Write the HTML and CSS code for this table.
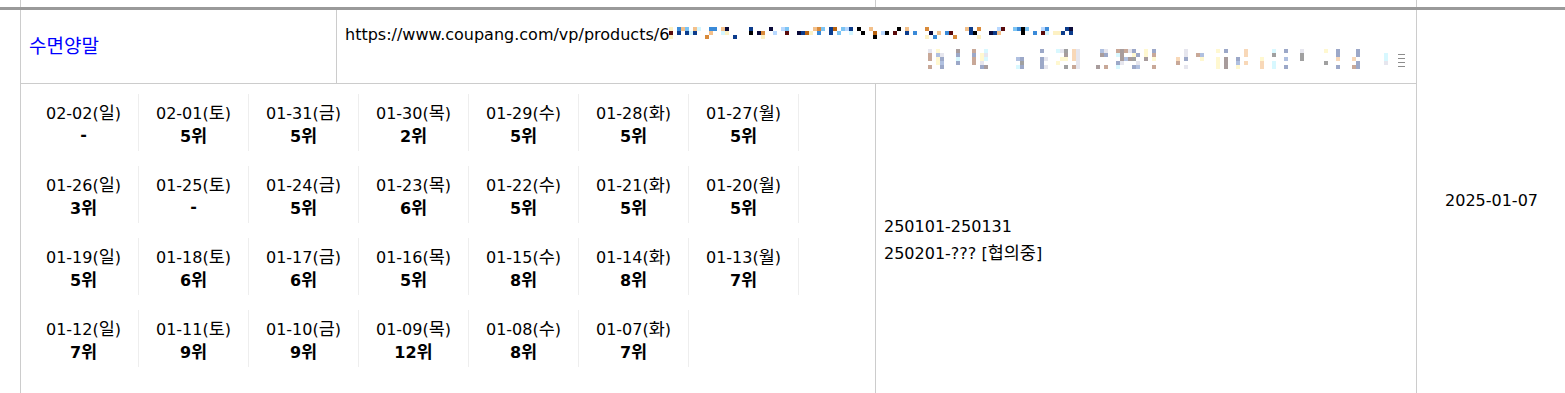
FILE: index.html
```html
<!DOCTYPE html>
<html lang="ko">
<head>
<meta charset="utf-8">
<title>순위</title>
<link rel="stylesheet" href="styles.css">
</head>
<body>
<div class="prev-row">
  <div class="prev-cell prev-a"></div>
  <div class="prev-cell prev-b"></div>
  <div class="prev-cell prev-c"></div>
</div>
<div class="divider"></div>
<table class="sheet">
  <colgroup>
    <col class="c1"><col class="c2"><col class="c3"><col class="c4">
  </colgroup>
  <tbody>
    <tr class="row-top">
      <td class="name"><a href="#" class="name-link"><span class="ko ko-name">수면양말</span></a></td>
      <td class="url" colspan="2">
        <div class="url-line">https://www.coupang.com/vp/products/6<svg class="mosaic mosaic-a" id="mosaicA" width="404" height="12" viewBox="0 0 404 12"></svg></div>
        <div class="url-sub"><svg class="mosaic mosaic-b" id="mosaicB" width="480" height="20" viewBox="0 0 480 20"></svg></div>
      </td>
      <td class="reg" rowspan="2">2025-01-07</td>
    </tr>
    <tr class="row-bottom">
      <td class="ranks" colspan="2">
        <div class="rank-grid">
          <div class="day"><div class="d">02-02(<span class="ko">일</span>)</div><div class="r">-</div></div>
          <div class="day"><div class="d">02-01(<span class="ko">토</span>)</div><div class="r">5<span class="ko">위</span></div></div>
          <div class="day"><div class="d">01-31(<span class="ko">금</span>)</div><div class="r">5<span class="ko">위</span></div></div>
          <div class="day"><div class="d">01-30(<span class="ko">목</span>)</div><div class="r">2<span class="ko">위</span></div></div>
          <div class="day"><div class="d">01-29(<span class="ko">수</span>)</div><div class="r">5<span class="ko">위</span></div></div>
          <div class="day"><div class="d">01-28(<span class="ko">화</span>)</div><div class="r">5<span class="ko">위</span></div></div>
          <div class="day"><div class="d">01-27(<span class="ko">월</span>)</div><div class="r">5<span class="ko">위</span></div></div>
          <div class="day"><div class="d">01-26(<span class="ko">일</span>)</div><div class="r">3<span class="ko">위</span></div></div>
          <div class="day"><div class="d">01-25(<span class="ko">토</span>)</div><div class="r">-</div></div>
          <div class="day"><div class="d">01-24(<span class="ko">금</span>)</div><div class="r">5<span class="ko">위</span></div></div>
          <div class="day"><div class="d">01-23(<span class="ko">목</span>)</div><div class="r">6<span class="ko">위</span></div></div>
          <div class="day"><div class="d">01-22(<span class="ko">수</span>)</div><div class="r">5<span class="ko">위</span></div></div>
          <div class="day"><div class="d">01-21(<span class="ko">화</span>)</div><div class="r">5<span class="ko">위</span></div></div>
          <div class="day"><div class="d">01-20(<span class="ko">월</span>)</div><div class="r">5<span class="ko">위</span></div></div>
          <div class="day"><div class="d">01-19(<span class="ko">일</span>)</div><div class="r">5<span class="ko">위</span></div></div>
          <div class="day"><div class="d">01-18(<span class="ko">토</span>)</div><div class="r">6<span class="ko">위</span></div></div>
          <div class="day"><div class="d">01-17(<span class="ko">금</span>)</div><div class="r">6<span class="ko">위</span></div></div>
          <div class="day"><div class="d">01-16(<span class="ko">목</span>)</div><div class="r">5<span class="ko">위</span></div></div>
          <div class="day"><div class="d">01-15(<span class="ko">수</span>)</div><div class="r">8<span class="ko">위</span></div></div>
          <div class="day"><div class="d">01-14(<span class="ko">화</span>)</div><div class="r">8<span class="ko">위</span></div></div>
          <div class="day"><div class="d">01-13(<span class="ko">월</span>)</div><div class="r">7<span class="ko">위</span></div></div>
          <div class="day"><div class="d">01-12(<span class="ko">일</span>)</div><div class="r">7<span class="ko">위</span></div></div>
          <div class="day"><div class="d">01-11(<span class="ko">토</span>)</div><div class="r">9<span class="ko">위</span></div></div>
          <div class="day"><div class="d">01-10(<span class="ko">금</span>)</div><div class="r">9<span class="ko">위</span></div></div>
          <div class="day"><div class="d">01-09(<span class="ko">목</span>)</div><div class="r">12<span class="ko">위</span></div></div>
          <div class="day"><div class="d">01-08(<span class="ko">수</span>)</div><div class="r">8<span class="ko">위</span></div></div>
          <div class="day"><div class="d">01-07(<span class="ko">화</span>)</div><div class="r">7<span class="ko">위</span></div></div>
        </div>
      </td>
      <td class="period">250101-250131<br>250201-??? [<span class="ko">협의중</span>]</td>
    </tr>
  </tbody>
</table>
<script src="mosaic.js"></script>
</body>
</html>
```

FILE: styles.css
```css
html, body {
  margin: 0;
  padding: 0;
  background: #ffffff;
  overflow: hidden;
}
body {
  font-family: "DejaVu Sans", "Noto Sans CJK KR", sans-serif;
  font-size: 16px;
  color: #000000;
}
.ko {
  font-family: "Noto Sans CJK KR", sans-serif;
  font-size: 17.5px;
}
.ko-name { font-size: 19px; }
.prev-row {
  display: flex;
  height: 7px;
  margin-left: 20px;
}
.prev-cell {
  border-left: 1px solid #cccccc;
  box-sizing: border-box;
}
.prev-a { width: 855px; }
.prev-b { width: 541px; }
.prev-c { flex: 1; }
.divider {
  height: 3px;
  background: #9a9a9a;
}
.sheet {
  margin-left: 20px;
  width: 1546px;
  table-layout: fixed;
  border-collapse: collapse;
  border: 1px solid #cccccc;
  border-top: none;
}
.c1 { width: 316px; }
.c2 { width: 539px; }
.c3 { width: 541px; }
.c4 { width: 150px; }
.sheet td {
  border: 1px solid #cccccc;
  padding: 8px;
  line-height: 24px;
  vertical-align: middle;
}
.sheet .row-top td { border-top: none; }
.row-top { height: 73px; }
.name-link {
  color: #0000ff;
  text-decoration: none;
}
.url { padding: 6px 6px 8px 8px; }
.url-line {
  white-space: nowrap;
  line-height: 24px;
}
.mosaic { display: inline-block; }
.mosaic-a { vertical-align: 1px; }
.url-sub {
  text-align: right;
  height: 20px;
  margin-top: 2px;
}
.mosaic-b { display: block; margin-left: auto; }
.reg { text-align: center; }
.sheet td.ranks {
  padding: 10px 8px 11px 8px;
  vertical-align: top;
}
.rank-grid {
  display: flex;
  flex-wrap: wrap;
}
.day {
  width: 110px;
  box-sizing: border-box;
  border-right: 1px solid #eeeeee;
  margin-bottom: 15px;
  padding: 6px 0 5px;
  text-align: center;
  line-height: 23px;
}
.day .d, .day .r { height: 23px; }
.day .r { font-weight: bold; }
.sheet td.period {
  text-align: left;
  line-height: 25px;
  padding: 11px 8px 8px;
}
```

FILE: mosaic.js
```js
(function () {
  var NS = "http://www.w3.org/2000/svg";
  function rng(seed) {
    return function () {
      seed |= 0; seed = (seed + 0x6D2B79F5) | 0;
      var t = Math.imul(seed ^ (seed >>> 15), 1 | seed);
      t = (t + Math.imul(t ^ (t >>> 7), 61 | t)) ^ t;
      return ((t ^ (t >>> 14)) >>> 0) / 4294967296;
    };
  }
  function rect(svg, x, y, w, h, c) {
    var r = document.createElementNS(NS, "rect");
    r.setAttribute("x", x); r.setAttribute("y", y);
    r.setAttribute("width", w); r.setAttribute("height", h);
    r.setAttribute("fill", c);
    svg.appendChild(r);
  }
  var a = document.getElementById("mosaicA");
  var pa = ["#fdf1c4", "#f3c08a", "#d98a3a", "#b8620e", "#7cc4f4", "#3a8ad8",
            "#0c3c8c", "#0b0b3a", "#000000", "#5a0a0a", "#d4f6ff", "#b8d8ff"];
  var ra = rng(7);
  for (var x = 0; x < 404; x += 4) {
    for (var y = 0; y < 3; y++) {
      var p = y === 2 ? 0.12 : 0.45;
      if (x < 4 && y < 2) { rect(a, x, y * 4, 4, 4, y ? "#5a0a0a" : "#fdf1c4"); continue; }
      if (ra() < p) rect(a, x, y * 4, 4, 4, pa[Math.floor(ra() * pa.length)]);
    }
  }
  var b = document.getElementById("mosaicB");
  var pb = ["#a89c9c", "#9ca8c8", "#c8a898", "#f8d8b8", "#d8f8ff", "#fff8d0",
            "#a0a0a0", "#b0c0e0", "#e6e6ee"];
  var rb = rng(19);
  for (var xb = 0; xb < 468; xb += 4) {
    if (rb() < 0.45) {
      var col = pb[Math.floor(rb() * pb.length)];
      for (var yb = 0; yb < 5; yb++) {
        if (rb() < 0.6) rect(b, xb, yb * 4, 4, 4, rb() < 0.7 ? col : pb[Math.floor(rb() * pb.length)]);
      }
    }
  }
  for (var i = 0; i < 4; i++) rect(b, 470, 5 + i * 4, 7, 1, "#8c8c8c");
})();
```
